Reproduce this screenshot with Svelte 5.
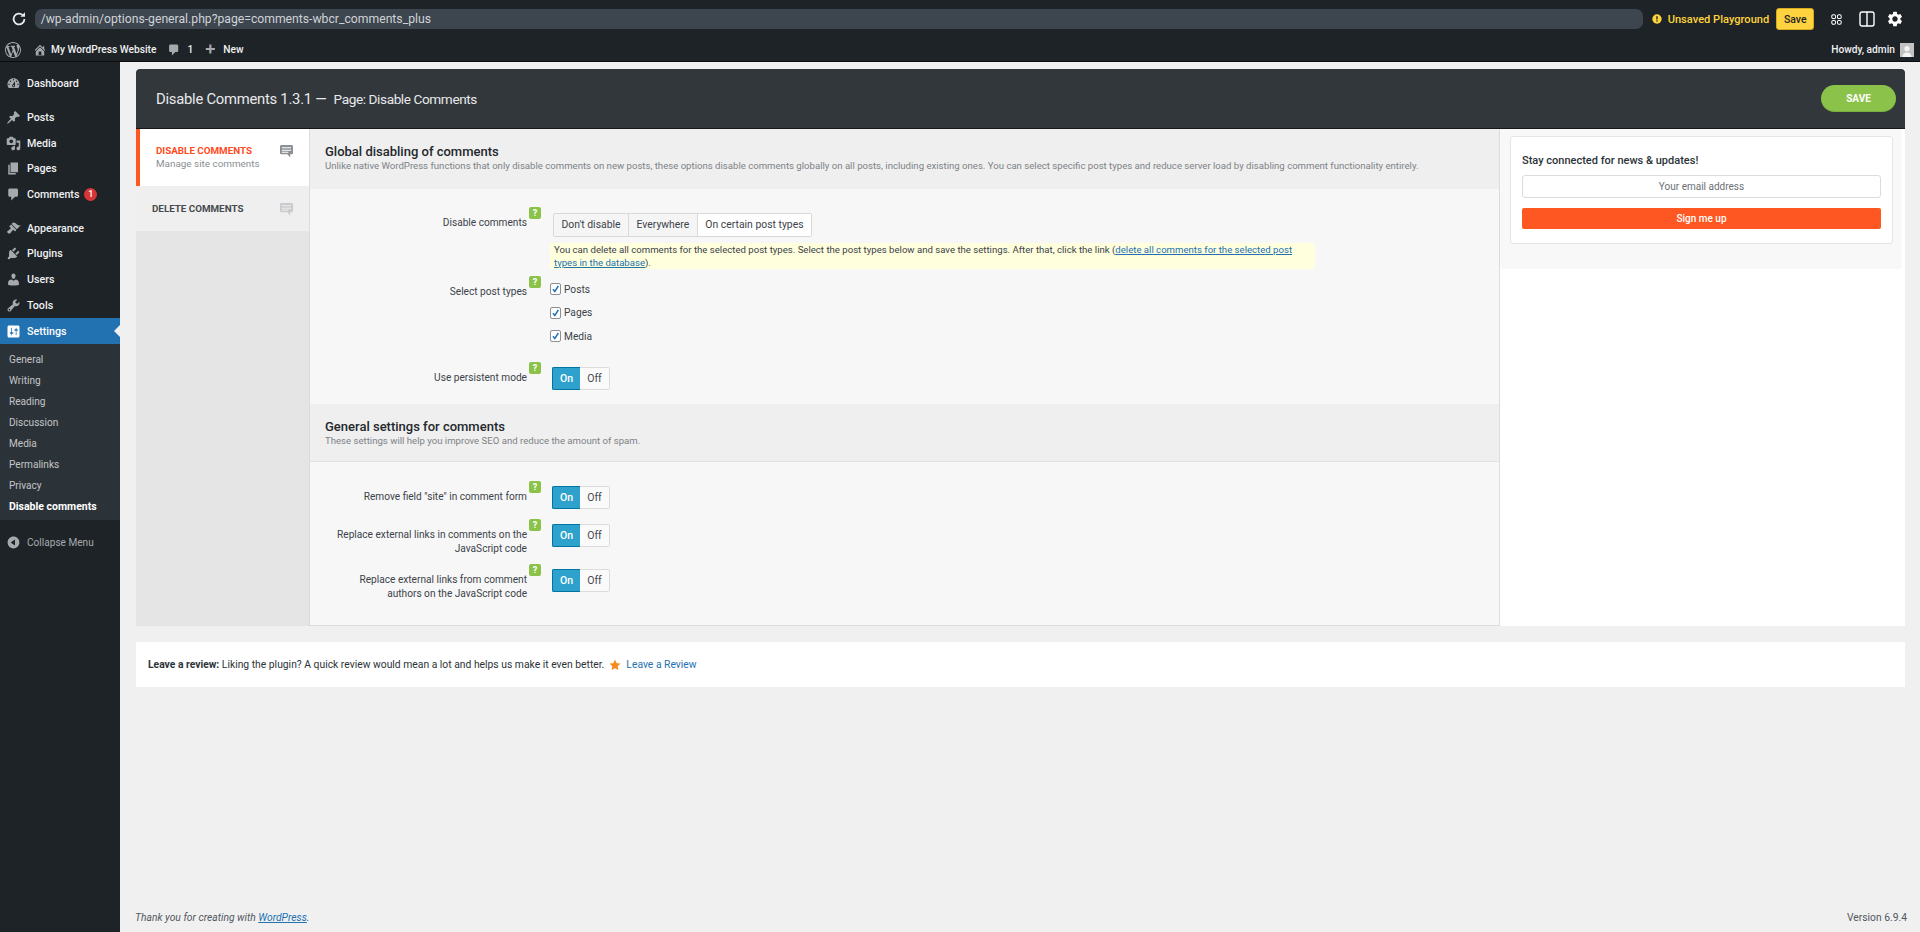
<script>
  const dashicons = {
    dashboard: "M3.76 16h12.48c1.1-1.37 1.76-3.11 1.76-5 0-4.42-3.58-8-8-8s-8 3.58-8 8c0 1.89.66 3.63 1.76 5zM10 4c.55 0 1 .45 1 1s-.45 1-1 1-1-.45-1-1 .45-1 1-1zM6 6c.55 0 1 .45 1 1s-.45 1-1 1-1-.45-1-1 .45-1 1-1zm8 0c.55 0 1 .45 1 1s-.45 1-1 1-1-.45-1-1 .45-1 1-1zm-5.37 5.55L12 7v6c0 1.1-.9 2-2 2s-2-.9-2-2c0-.57.24-1.08.63-1.45zM4 10c.55 0 1 .45 1 1s-.45 1-1 1-1-.45-1-1 .45-1 1-1zm12 0c.55 0 1 .45 1 1s-.45 1-1 1-1-.45-1-1 .45-1 1-1zm-5 3c0-.55-.45-1-1-1s-1 .45-1 1 .45 1 1 1 1-.45 1-1z",
    post: "M10.44 3.02l1.82-1.82 6.36 6.35-1.83 1.82c-1.05-.68-2.48-.57-3.41.36l-.75.75c-.92.93-1.04 2.35-.35 3.41l-1.83 1.82-2.41-2.41-2.8 2.79c-.42.42-3.38 2.71-3.8 2.29s1.86-3.39 2.28-3.81l2.79-2.79L4.1 9.36l1.83-1.82c1.05.69 2.48.57 3.4-.36l.75-.75c.93-.92 1.05-2.35.36-3.41z",
    media: "M13 11V4c0-.55-.45-1-1-1h-1.67L9 1H5L3.67 3H2c-.55 0-1 .45-1 1v7c0 .55.45 1 1 1h10c.55 0 1-.45 1-1zM7 4.5c1.38 0 2.5 1.12 2.5 2.5S8.38 9.5 7 9.5 4.5 8.38 4.5 7 5.62 4.5 7 4.5zM14 6h5v10.5c0 1.38-1.12 2.5-2.5 2.5S14 17.88 14 16.5s1.12-2.5 2.5-2.5c.17 0 .34.02.5.05V9h-3V6zm-4 8.05V13h2v3.5c0 1.38-1.12 2.5-2.5 2.5S7 17.88 7 16.5 8.12 14 9.5 14c.17 0 .34.02.5.05z",
    page: "M6 15V2h10v13H6zm-1 1h8v2H3V5h2v11z",
    comments: "M5 2h9c1.1 0 2 .9 2 2v7c0 1.1-.9 2-2 2h-2l-5 5v-5H5c-1.1 0-2-.9-2-2V4c0-1.1.9-2 2-2z",
    appearance: "M14.48 11.06L7.41 3.99l1.5-1.5c.5-.56 2.3-.47 3.51.32 1.21.8 1.43 1.28 2.91 2.1 1.18.64 2.45 1.26 4.45.85zm-.71.71L6.7 4.7 4.93 6.47c-.39.39-.39 1.02 0 1.41l1.06 1.06c.39.39.39 1.03 0 1.42-.6.6-1.43 1.11-2.21 1.69-.35.26-.7.53-1.01.84C1.43 13.23 1.1 14.57 2.4 15.87c1.31 1.31 2.64.98 3.98-.36.31-.31.58-.66.85-1.02.57-.78 1.08-1.61 1.69-2.21.39-.39 1.02-.39 1.41 0l1.06 1.06c.39.39 1.02.39 1.41 0z",
    plugins: "M13.11 4.36L9.87 7.6 8 5.73l3.24-3.24c.35-.34 1.05-.2 1.56.32.52.51.66 1.21.31 1.55zm-8 1.77l.91-1.12 9.01 9.01-1.19.84c-.71.71-2.63 1.16-3.82 1.16H6.14L4.9 17.26c-.59.59-1.54.59-2.12 0-.59-.58-.59-1.53 0-2.12l1.24-1.24v-3.88c0-1.13.4-3.19 1.09-3.89zm7.26 3.97l3.24-3.24c.34-.35 1.04-.21 1.55.31.52.51.66 1.21.31 1.55l-3.24 3.25z",
    users: "M10 9.25c-2.27 0-2.73-3.44-2.73-3.44C7 4.02 7.82 2 9.97 2c2.16 0 2.98 2.02 2.71 3.81 0 0-.41 3.44-2.68 3.44zm0 2.57L12.72 10c2.39 0 4.52 2.33 4.52 4.53v2.49s-3.65 1.13-7.24 1.13c-3.65 0-7.24-1.13-7.24-1.13v-2.49c0-2.25 1.94-4.48 4.47-4.48z",
    tools: "M16.68 9.77c-1.34 1.34-3.3 1.67-4.95.99l-5.41 6.52c-.99.99-2.59.99-3.58 0s-.99-2.59 0-3.57l6.52-5.42c-.68-1.65-.35-3.61.99-4.95 1.28-1.28 3.12-1.62 4.72-1.06l-2.89 2.89 2.82 2.82 2.86-2.87c.53 1.58.18 3.39-1.08 4.67zM3.81 16.21c.4.39 1.04.39 1.43 0 .4-.4.4-1.04 0-1.43-.39-.4-1.03-.4-1.43 0-.39.39-.39 1.03 0 1.43z",
    settings: "M18 16V4c0-1.1-.9-2-2-2H4c-1.1 0-2 .9-2 2v12c0 1.1.9 2 2 2h12c1.1 0 2-.9 2-2zM8 11h1c.55 0 1 .45 1 1s-.45 1-1 1H8v1.5c0 .28-.22.5-.5.5s-.5-.22-.5-.5V13H6c-.55 0-1-.45-1-1s.45-1 1-1h1V5.5c0-.28.22-.5.5-.5s.5.22.5.5V11zm5-2h-1c-.55 0-1-.45-1-1s.45-1 1-1h1V5.5c0-.28.22-.5.5-.5s.5.22.5.5V7h1c.55 0 1 .45 1 1s-.45 1-1 1h-1v5.5c0 .28-.22.5-.5.5s-.5-.22-.5-.5V9z",
    home: "M16 8.5l1.53 1.53-1.06 1.06L10 4.62l-6.47 6.47-1.06-1.06L10 2.5l4 4v-2h2v4zm-6-2.46l6 5.99V18H4v-5.97zM12 17v-5H8v5h4z",
    collapse: "M10 2.16c4.33 0 7.84 3.51 7.84 7.84s-3.51 7.84-7.84 7.84S2.16 14.33 2.16 10 5.71 2.16 10 2.16zm2 11.72V6.12L6.18 9.97z",
    wp: "M20 10c0-5.51-4.49-10-10-10C4.48 0 0 4.49 0 10c0 5.52 4.48 10 10 10 5.51 0 10-4.48 10-10zM7.78 15.37L4.37 6.22c.55-.02 1.17-.08 1.17-.08.5-.06.44-1.13-.06-1.11 0 0-1.45.11-2.37.11-.18 0-.37 0-.58-.01C4.12 2.69 6.87 1.11 10 1.11c2.33 0 4.45.87 6.05 2.34-.68-.11-1.65.39-1.65 1.58 0 .74.45 1.36.9 2.1.35.61.55 1.36.55 2.46 0 1.49-1.4 5-1.4 5l-3.03-8.37c.54-.02.82-.17.82-.17.5-.05.44-1.25-.06-1.22 0 0-1.44.12-2.38.12-.87 0-2.33-.12-2.33-.12-.5-.03-.56 1.2-.06 1.22l.92.08 1.26 3.41zM17.41 10c.24-.64.74-1.87.43-4.25.7 1.29 1.05 2.71 1.05 4.25 0 3.29-1.73 6.24-4.4 7.78.97-2.59 1.94-5.2 2.92-7.78zM6.1 18.09C3.12 16.65 1.11 13.53 1.11 10c0-1.3.23-2.48.72-3.59C3.25 10.3 4.67 14.2 6.1 18.09zm4.03-6.63l2.58 6.98c-.86.29-1.76.45-2.71.45-.79 0-1.57-.11-2.29-.33.81-2.38 1.62-4.74 2.42-7.1z",
    plus: "M17 7v3h-5v5H9v-5H4V7h5V2h3v5h5z"
  };
  const menuTop = [
    { key: 'dashboard', label: 'Dashboard', cls: 'sep' },
    { key: 'post', label: 'Posts' },
    { key: 'media', label: 'Media' },
    { key: 'page', label: 'Pages' },
    { key: 'comments', label: 'Comments', badge: '1', cls: 'sep' },
    { key: 'appearance', label: 'Appearance' },
    { key: 'plugins', label: 'Plugins' },
    { key: 'users', label: 'Users' },
    { key: 'tools', label: 'Tools' }
  ];
  const sub = ['General', 'Writing', 'Reading', 'Discussion', 'Media', 'Permalinks', 'Privacy'];
  const gear = "M19.14 12.94c.04-.3.06-.61.06-.94 0-.32-.02-.64-.07-.94l2.03-1.58c.18-.14.23-.41.12-.61l-1.92-3.32c-.12-.22-.37-.29-.59-.22l-2.39.96c-.5-.38-1.03-.7-1.62-.94l-.36-2.54c-.04-.24-.24-.41-.48-.41h-3.84c-.24 0-.43.17-.47.41l-.36 2.54c-.59.24-1.13.57-1.62.94l-2.39-.96c-.22-.08-.47 0-.59.22L2.74 8.87c-.12.21-.08.47.12.61l2.03 1.58c-.05.3-.09.63-.09.94s.02.64.07.94l-2.03 1.58c-.18.14-.23.41-.12.61l1.92 3.32c.12.22.37.29.59.22l2.39-.96c.5.38 1.03.7 1.62.94l.36 2.54c.05.24.24.41.48.41h3.84c.24 0 .44-.17.47-.41l.36-2.54c.59-.24 1.13-.56 1.62-.94l2.39.96c.22.08.47 0 .59-.22l1.92-3.32c.12-.22.07-.47-.12-.61l-2.01-1.58zM12 15.6c-1.98 0-3.6-1.62-3.6-3.6s1.62-3.6 3.6-3.6 3.6 1.62 3.6 3.6-1.62 3.6-3.6 3.6z";
</script>

{#snippet dash(key, cls)}
  <svg class={cls} viewBox="0 0 20 20" aria-hidden="true"><path d={dashicons[key]} /></svg>
{/snippet}

{#snippet chat(cls)}
  <svg class={cls} viewBox="0 0 14 14" aria-hidden="true">
    <path fill-rule="evenodd" d="M1.5 0h11A1.5 1.5 0 0 1 14 1.5v7a1.5 1.5 0 0 1-1.5 1.5H11v3.5L8 10H1.5A1.5 1.5 0 0 1 0 8.5v-7A1.5 1.5 0 0 1 1.5 0zM2 2.4v1.2h10V2.4zm0 2.6v1.2h10V5zm0 2.4v1h7v-1z" />
  </svg>
{/snippet}

{#snippet help()}
  <span class="help">?</span>
{/snippet}

{#snippet toggle()}
  <div class="toggle"><span class="on">On</span><span class="off">Off</span></div>
{/snippet}

<div class="page">
  <header class="browser">
    <svg class="reload" viewBox="0 0 16 16" aria-hidden="true">
      <path d="M13.4 8a5.400 5.400 0 1 1-1.700-3.900" />
      <path class="fill" d="M14 1.200v4.600H9.400z" />
    </svg>
    <div class="url">/wp-admin/options-general.php?page=comments-wbcr_comments_plus</div>
    <svg class="warn" viewBox="0 0 12 12" aria-hidden="true">
      <circle cx="6" cy="6" r="5.6" />
      <rect class="mark" x="5.2" y="2.6" width="1.6" height="4" />
      <rect class="mark" x="5.2" y="7.6" width="1.6" height="1.6" />
    </svg>
    <span class="unsaved">Unsaved Playground</span>
    <button class="save-yellow">Save</button>
    <svg class="tool grid" viewBox="0 0 14 14" aria-hidden="true">
      <rect x="1" y="1" width="4.800" height="4.800" rx="1.800" /><rect x="8.200" y="1" width="4.800" height="4.800" rx="1.800" />
      <rect x="1" y="8.200" width="4.800" height="4.800" rx="1.800" /><rect x="8.200" y="8.200" width="4.800" height="4.800" rx="1.800" />
    </svg>
    <svg class="tool split" viewBox="0 0 16 16" aria-hidden="true">
      <rect x="1" y="1" width="14" height="14" rx="2" /><path d="M8 1v14" />
    </svg>
    <svg class="tool cog" viewBox="0 0 24 24" aria-hidden="true"><path d={gear} /></svg>
  </header>

  <nav class="adminbar">
    {@render dash('wp', 'ab-wp')}
    <span class="ab-item ab-site">{@render dash('home', 'ab-ic')}My WordPress Website</span>
    <span class="ab-item ab-count">{@render dash('comments', 'ab-ic bubble')}1</span>
    <span class="ab-item ab-new">{@render dash('plus', 'ab-ic plus')}New</span>
    <span class="howdy">Howdy, admin</span>
    <svg class="avatar" viewBox="0 0 14 14" aria-hidden="true">
      <rect width="14" height="14" fill="#c3c3c3" />
      <circle cx="7" cy="5.6" r="2.6" fill="#f4f4f4" />
      <path d="M2.5 14c0-3 2-4.6 4.5-4.6s4.500 1.600 4.500 4.600z" fill="#f4f4f4" />
    </svg>
  </nav>

  <div class="shell">
    <aside class="sidebar">
      <ul class="menu">
        {#each menuTop as m}
          <li class="mi {m.cls || ''}">
            {@render dash(m.key, 'mi-ic')}
            <span>{m.label}</span>
            {#if m.badge}<b class="count">{m.badge}</b>{/if}
          </li>
        {/each}
        <li class="mi current">
          {@render dash('settings', 'mi-ic')}
          <span>Settings</span>
          <i class="arrow"></i>
        </li>
      </ul>
      <ul class="submenu">
        {#each sub as s}<li>{s}</li>{/each}
        <li class="strong">Disable comments</li>
      </ul>
      <div class="collapse">
        {@render dash('collapse', 'mi-ic')}
        <span>Collapse Menu</span>
      </div>
    </aside>

    <main class="content">
      <section class="plugin">
        <div class="phead">
          <h1>Disable Comments 1.3.1 —</h1>
          <span class="psub">Page: Disable Comments</span>
          <button class="save-green">SAVE</button>
        </div>
        <div class="pbody">
          <div class="tabs">
            <div class="tab active">
              <div>
                <strong>DISABLE COMMENTS</strong>
                <small>Manage site comments</small>
              </div>
              {@render chat('chat')}
            </div>
            <div class="tab second">
              <strong>DELETE COMMENTS</strong>
              {@render chat('chat pale')}
            </div>
          </div>

          <div class="form">
            <div class="shead">
              <h3>Global disabling of comments</h3>
              <p>Unlike native WordPress functions that only disable comments on new posts, these options disable comments globally on all posts, including existing ones. You can select specific post types and reduce server load by disabling comment functionality entirely.</p>
            </div>
            <div class="sbody first">
              <div class="row">
                <div class="label l-seg">Disable comments{@render help()}</div>
                <div class="ctrl">
                  <div class="seg"><span>Don't disable</span><span>Everywhere</span><span class="sel">On certain post types</span></div>
                  <div class="note">You can delete all comments for the selected post types. Select the post types below and save the settings. After that, click the link (<a href="#top">delete all comments for the selected post types in the database</a>).</div>
                </div>
              </div>
              <div class="row r-types">
                <div class="label l-types">Select post types{@render help()}</div>
                <div class="ctrl checks">
                  {#each ['Posts', 'Pages', 'Media'] as t}
                    <label class="check">
                      <span class="box"><svg viewBox="0 0 12 12" aria-hidden="true"><path d="M2.600 6.200l2.500 3L9.800 2" /></svg></span>
                      {t}
                    </label>
                  {/each}
                </div>
              </div>
              <div class="row r-persist">
                <div class="label">Use persistent mode{@render help()}</div>
                <div class="ctrl tctrl">{@render toggle()}</div>
              </div>
            </div>

            <div class="shead second">
              <h3>General settings for comments</h3>
              <p>These settings will help you improve SEO and reduce the amount of spam.</p>
            </div>
            <div class="sbody">
              <div class="row">
                <div class="label">Remove field "site" in comment form{@render help()}</div>
                <div class="ctrl tctrl">{@render toggle()}</div>
              </div>
              <div class="row r-b">
                <div class="label">Replace external links in comments on the JavaScript code{@render help()}</div>
                <div class="ctrl tctrl">{@render toggle()}</div>
              </div>
              <div class="row r-c">
                <div class="label">Replace external links from comment authors on the JavaScript code{@render help()}</div>
                <div class="ctrl tctrl">{@render toggle()}</div>
              </div>
            </div>
          </div>

          <div class="side">
            <div class="widget">
              <div class="card">
                <h4>Stay connected for news &amp; updates!</h4>
                <div class="email">Your email address</div>
                <button class="signup">Sign me up</button>
              </div>
            </div>
          </div>
        </div>
      </section>

      <section class="review">
        <b>Leave a review:</b>&nbsp;<span>Liking the plugin? A quick review would mean a lot and helps us make it even better.</span>
        <svg class="star" viewBox="0 0 20 20" aria-hidden="true"><path d="M10 1l2.800 5.900 6.400.8-4.700 4.400 1.200 6.400L10 15.400l-5.700 3.100 1.200-6.400L.8 7.700l6.400-.8z" /></svg>
        <a href="#top">Leave a Review</a>
      </section>

      <footer class="foot">
        <em>Thank you for creating with <a href="#top">WordPress</a>.</em>
        <span>Version 6.9.4</span>
      </footer>
    </main>
  </div>
</div>

<style>
  :global(html), :global(body) { margin: 0; padding: 0; height: 932px; overflow: hidden; background: #f0f0f1; }
  .page {
    width: 1920px; height: 932px; display: flex; flex-direction: column;
    font-family: Roboto, "Liberation Sans", sans-serif; font-size: 11px; color: #3c434a;
    -webkit-font-smoothing: antialiased;
  }
  svg { fill: currentColor; display: block; flex: none; }
  ul { list-style: none; margin: 0; padding: 0; }
  a { color: #2271b1; }
  button { font-family: inherit; border: 0; padding: 0; }
  h1, h3, h4, p { margin: 0; }

  /* browser bar */
  .browser { height: 38px; background: #1e2327; display: flex; align-items: center; color: #fff; box-sizing: border-box; }
  .reload { width: 16px; height: 16px; margin: 0 8px 0 10.7px; color: #e9ecef; fill: none; stroke: #e9ecef; stroke-width: 1.8; }
  .reload .fill { fill: #e9ecef; stroke: none; }
  .url { width: 1608px; height: 20px; box-sizing: border-box; background: #3d454e; border-radius: 7px; color: #cfd3d7; font-size: 12.2px; line-height: 20px; padding-left: 6px; white-space: nowrap; }
  .warn { width: 10px; height: 10px; margin-left: 9px; color: #ffd43b; }
  .warn .mark { fill: #1e2327; }
  .unsaved { margin-left: 6px; color: #ffd43b; font-size: 11.1px; font-weight: 500; white-space: nowrap; }
  .save-yellow { width: 38px; height: 22px; margin-left: 7px; background: #ffd23f; border: 1px solid #d7a91f; border-radius: 3px; color: #1e2327; font-size: 10.5px; font-weight: 500; }
  .tool { width: 16px; height: 16px; }
  .grid { width: 11px; height: 11px; margin-left: 17px; fill: none; stroke: #fff; stroke-width: 1.3; }
  .split { margin-left: 17px; fill: none; stroke: #fff; stroke-width: 1.4; }
  .cog { margin-left: 11px; width: 18px; height: 18px; color: #fff; }

  /* admin bar */
  .adminbar { height: 23px; background: #1d2327; border-bottom: 1px solid #0a0c0e; display: flex; align-items: center; color: #f0f0f1; font-size: 10.2px; font-weight: 500; white-space: nowrap; }
  .ab-wp { width: 16px; height: 16px; margin-left: 5px; color: #a7aaad; }
  .ab-item { display: flex; align-items: center; }
  .ab-ic { width: 14px; height: 14px; color: #a7aaad; margin-right: 4px; }
  .ab-ic.bubble { margin-right: 6px; }
  .ab-ic.plus { margin-right: 6px; }
  .ab-site { margin-left: 12px; }
  .ab-count { margin-left: 11px; }
  .ab-new { margin-left: 10px; }
  .howdy { margin-left: auto; margin-right: 5px; }
  .avatar { width: 14px; height: 14px; margin-right: 6px; }

  .shell { flex: 1; display: flex; min-height: 0; }

  /* sidebar */
  .sidebar { width: 120px; flex: none; background: #1d2327; color: #f0f0f1; font-size: 10.7px; font-weight: 500; padding-top: 9px; box-sizing: border-box; }
  .mi { position: relative; height: 25.75px; display: flex; align-items: center; padding-left: 6px; }
  .mi.sep { margin-bottom: 7.75px; }
  .mi-ic { width: 15px; height: 15px; color: #a7aaad; margin-right: 6px; }
  .count { margin-left: 5px; width: 13px; height: 13px; border-radius: 50%; background: #d63638; color: #fff; font-size: 9px; line-height: 13px; text-align: center; font-weight: 500; }
  .current { background: #2271b1; color: #fff; }
  .current .mi-ic { color: #fff; }
  .arrow { position: absolute; right: 0; top: 7px; width: 0; height: 0; border: 6px solid transparent; border-right-color: #f0f0f1; border-left-width: 0; }
  .submenu { background: #2c3338; padding: 5px 0 3px; color: #c3c4c7; font-size: 10.1px; font-weight: 400; }
  .submenu li { height: 21px; line-height: 21px; padding-left: 9px; }
  .submenu .strong { color: #fff; font-weight: 700; font-size: 10.5px; }
  .collapse { display: flex; align-items: center; height: 26px; margin-top: 9px; padding-left: 6px; color: #a7aaad; font-size: 10.1px; font-weight: 400; }

  /* main */
  .content { flex: 1; display: flex; flex-direction: column; padding: 7px 15px 0 16px; min-width: 0; }
  .plugin { background: #fff; }
  .phead { height: 60px; box-sizing: border-box; background: #32373c; border-bottom: 1px solid #14181c; border-radius: 4px 4px 0 0; display: flex; align-items: center; padding: 0 9px 0 20px; color: #e8e9ea; }
  .phead h1 { font-size: 14.8px; font-weight: 400; letter-spacing: -.25px; white-space: nowrap; }
  .psub { margin-left: 7px; font-size: 13.6px; letter-spacing: -.4px; white-space: nowrap; }
  .save-green { margin-left: auto; width: 75px; height: 27px; border-radius: 14px; background: #8bc34a; color: #fff; font-size: 10px; font-weight: 700; border-bottom: 1px solid #7aaf3f; }

  .pbody { display: flex; height: 497px; }
  .tabs { width: 173px; flex: none; background: #e5e5e5; }
  .tab { display: flex; justify-content: space-between; align-items: flex-start; box-sizing: border-box; }
  .tab strong { display: block; font-size: 9.8px; font-weight: 700; white-space: nowrap; }
  .tab small { display: block; font-size: 9.9px; color: #8a8f94; margin-top: 2px; white-space: nowrap; }
  .active { height: 57px; background: #fff; border-left: 4px solid #ff5722; padding: 16px 16px 0 16px; }
  .active strong { color: #ff4a1c; }
  .second.tab { height: 45px; background: #efefef; padding: 17px 16px 0 16px; }
  .second.tab strong { color: #44494e; }
  .chat { width: 13px; height: 13px; color: #8c9095; }
  .chat.pale { color: #c9cccf; }

  .form { flex: 1; min-width: 0; background: #f7f7f7; border-left: 1px solid #dcdcdc; border-right: 1px solid #dcdcdc; border-bottom: 1px solid #dcdcdc; }
  .shead { height: 60px; box-sizing: border-box; background: #efefef; padding: 16px 15px 0; }
  .shead.second { height: 58px; border-bottom: 1px solid #e2e2e2; }
  .shead h3 { font-size: 13px; font-weight: 500; color: #23282d; line-height: 14px; }
  .shead p { font-size: 9.6px; color: #7d8287; line-height: 13px; white-space: nowrap; }
  .sbody { padding-top: 24px; }
  .sbody.first { height: 215px; box-sizing: border-box; }
  .row { display: flex; margin-bottom: 15px; }
  .label { position: relative; width: 217px; box-sizing: border-box; padding-left: 15px; margin-top: 4px; text-align: right; font-size: 10.15px; line-height: 14px; color: #3c434a; }
  .l-seg { margin-top: 3px; }
  .l-types { margin-top: 7.5px; }
  .help { position: absolute; right: -14px; top: -9px; width: 12px; height: 12px; background: #8bc34a; border-radius: 2px; color: #fff; font-size: 9px; font-weight: 700; line-height: 12px; text-align: center; }
  .ctrl { margin-left: 23px; flex: none; }
  .tctrl { margin-left: 25px; }
  .r-types { margin-top: -6.5px; margin-bottom: 18.5px; }
  .r-persist { margin-bottom: 0; }
  .r-b { margin-bottom: 13px; }
  .r-c { margin-bottom: 0; }

  .seg { display: inline-flex; margin-left: 3px; height: 24px; box-sizing: border-box; border: 1px solid #d9d9d9; border-radius: 2px; background: #f5f5f5; font-size: 10.4px; color: #3c434a; }
  .seg span { display: block; padding: 0 7.5px; line-height: 22px; border-right: 1px solid #d9d9d9; white-space: nowrap; }
  .seg .sel { background: #fff; border-right: 0; }
  .note { margin-top: 6px; width: 765px; height: 26px; box-sizing: border-box; background: #ffd; padding: 1px 8px 0 4px; font-size: 9.6px; line-height: 12.5px; color: #3c434a; }
  .check { display: flex; align-items: center; height: 23.5px; color: #3c434a; font-size: 10.2px; }
  .box { width: 9px; height: 10px; margin-right: 3px; border: 1px solid #8c8f94; border-radius: 2px; background: #fff; display: block; flex: none; }
  .box svg { width: 9px; height: 10px; fill: none; stroke: #1e73be; stroke-width: 2; }

  .toggle { display: flex; width: 58px; height: 23px; box-sizing: border-box; font-size: 10.5px; text-align: center; line-height: 22px; }
  .on { width: 28px; background: #2ea2cc; color: #fff; border: 1px solid #0074a2; border-right: 0; border-radius: 2px 0 0 2px; box-sizing: border-box; font-weight: 500; }
  .off { flex: 1; background: #fafafa; color: #44494e; border: 1px solid #dcdcdc; border-left: 0; border-radius: 0 2px 2px 0; box-sizing: border-box; }

  .side { width: 405px; flex: none; }
  .widget { width: 400px; height: 138px; box-sizing: border-box; margin-left: 1px; padding: 7px 8px 0 9px; background: #f8f8f8; box-shadow: 0 1px 2px rgba(0,0,0,.06); }
  .card { height: 108px; box-sizing: border-box; background: #fff; border: 1px solid #e5e5e5; border-radius: 3px; padding: 17px 11px 0; }
  .card h4 { font-size: 11px; font-weight: 500; color: #2c3338; line-height: 14px; white-space: nowrap; }
  .email { height: 23px; margin-top: 7px; box-sizing: border-box; border: 1px solid #dcdcde; border-radius: 3px; background: #fff; text-align: center; line-height: 21px; color: #6b7075; font-size: 10px; }
  .signup { display: block; width: 100%; height: 21px; margin-top: 10px; background: #ff5722; color: #fff; border-radius: 2px; font-size: 10px; font-weight: 500; }

  .review { margin-top: 16px; height: 45px; background: #fff; display: flex; align-items: center; padding-left: 12px; font-size: 10.33px; color: #2c3338; white-space: nowrap; }
  .review b { font-weight: 700; }
  .star { width: 12px; height: 12px; color: #f78b1f; margin: 0 5px; }
  .review a { text-decoration: none; color: #2271b1; }

  .foot { margin-top: auto; height: 21px; display: flex; justify-content: space-between; font-size: 10.3px; color: #50575e; margin: auto -2px 0 -1px; }
  .foot a { color: #2271b1; }
</style>
